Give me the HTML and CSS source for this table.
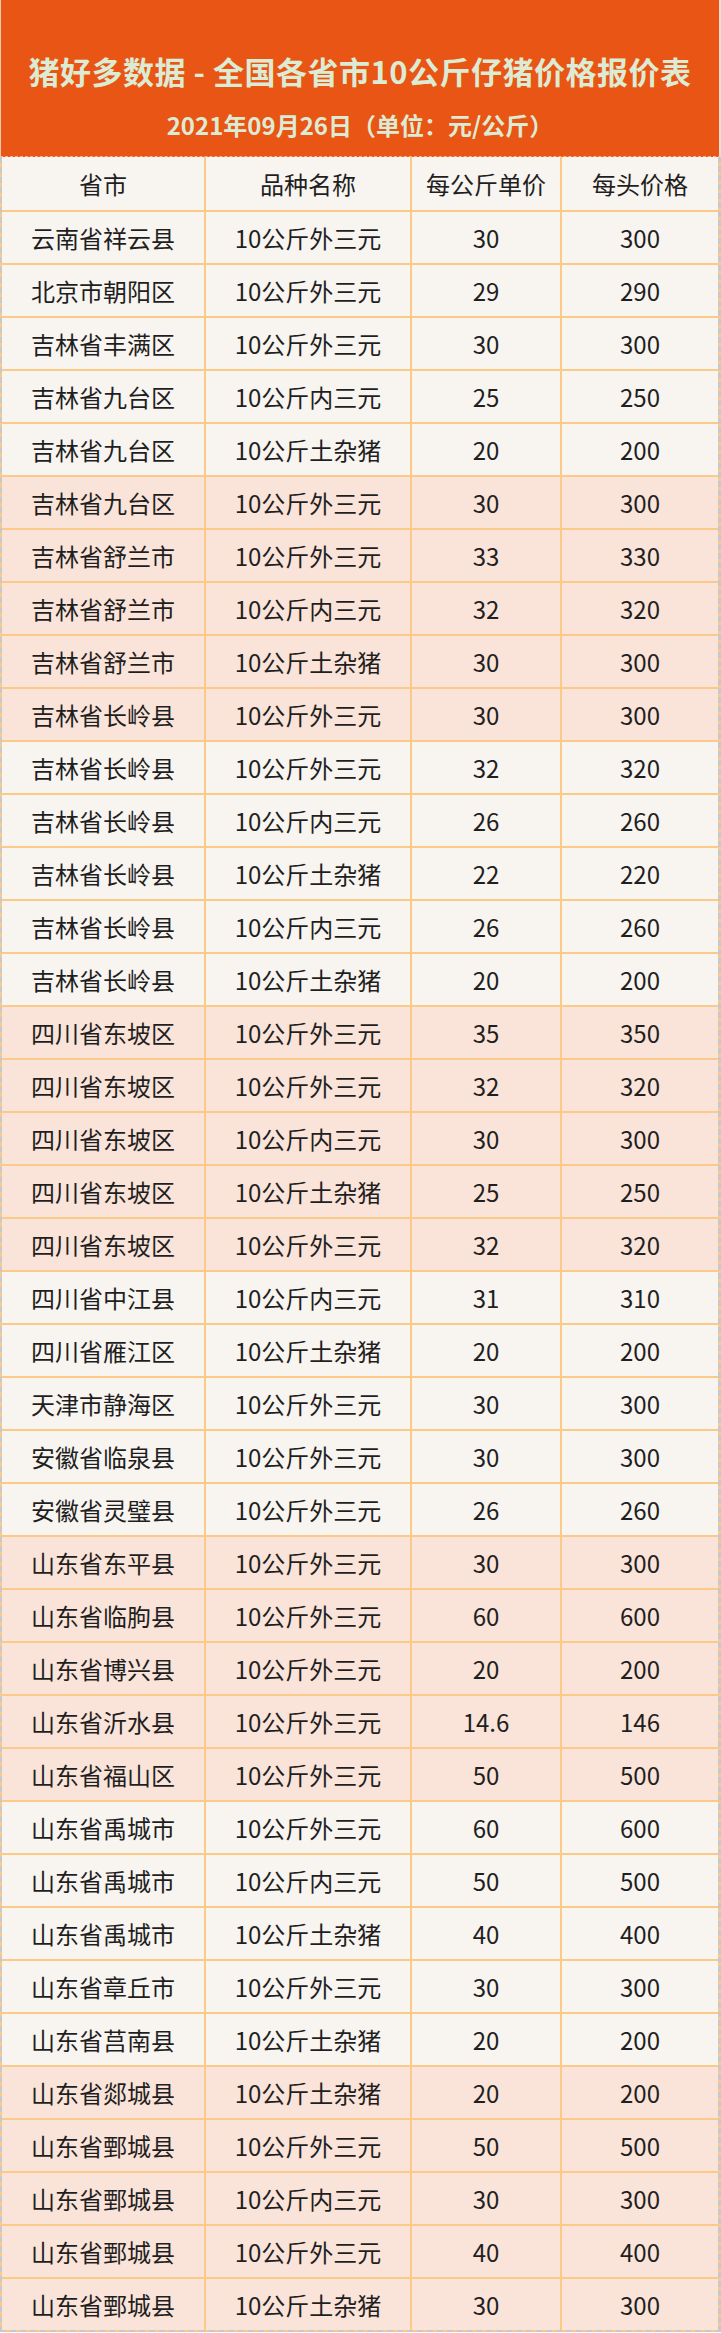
FILE: index.html
```html
<!DOCTYPE html>
<html lang="zh-CN">
<head>
<meta charset="utf-8">
<title>猪好多数据 - 全国各省市10公斤仔猪价格报价表</title>
<link rel="stylesheet" href="styles.css">
</head>
<body>
<div class="sheet">
  <header class="banner">
    <h1 class="title">猪好多数据 - 全国各省市10公斤仔猪价格报价表</h1>
    <p class="subtitle">2021年09月26日（单位：元/公斤）</p>
  </header>
  <div class="table">
    <div class="row head"><div>省市</div><div>品种名称</div><div>每公斤单价</div><div>每头价格</div></div>
    <div class="row a"><div>云南省祥云县</div><div>10公斤外三元</div><div>30</div><div>300</div></div>
    <div class="row a"><div>北京市朝阳区</div><div>10公斤外三元</div><div>29</div><div>290</div></div>
    <div class="row a"><div>吉林省丰满区</div><div>10公斤外三元</div><div>30</div><div>300</div></div>
    <div class="row a"><div>吉林省九台区</div><div>10公斤内三元</div><div>25</div><div>250</div></div>
    <div class="row a"><div>吉林省九台区</div><div>10公斤土杂猪</div><div>20</div><div>200</div></div>
    <div class="row b"><div>吉林省九台区</div><div>10公斤外三元</div><div>30</div><div>300</div></div>
    <div class="row b"><div>吉林省舒兰市</div><div>10公斤外三元</div><div>33</div><div>330</div></div>
    <div class="row b"><div>吉林省舒兰市</div><div>10公斤内三元</div><div>32</div><div>320</div></div>
    <div class="row b"><div>吉林省舒兰市</div><div>10公斤土杂猪</div><div>30</div><div>300</div></div>
    <div class="row b"><div>吉林省长岭县</div><div>10公斤外三元</div><div>30</div><div>300</div></div>
    <div class="row a"><div>吉林省长岭县</div><div>10公斤外三元</div><div>32</div><div>320</div></div>
    <div class="row a"><div>吉林省长岭县</div><div>10公斤内三元</div><div>26</div><div>260</div></div>
    <div class="row a"><div>吉林省长岭县</div><div>10公斤土杂猪</div><div>22</div><div>220</div></div>
    <div class="row a"><div>吉林省长岭县</div><div>10公斤内三元</div><div>26</div><div>260</div></div>
    <div class="row a"><div>吉林省长岭县</div><div>10公斤土杂猪</div><div>20</div><div>200</div></div>
    <div class="row b"><div>四川省东坡区</div><div>10公斤外三元</div><div>35</div><div>350</div></div>
    <div class="row b"><div>四川省东坡区</div><div>10公斤外三元</div><div>32</div><div>320</div></div>
    <div class="row b"><div>四川省东坡区</div><div>10公斤内三元</div><div>30</div><div>300</div></div>
    <div class="row b"><div>四川省东坡区</div><div>10公斤土杂猪</div><div>25</div><div>250</div></div>
    <div class="row b"><div>四川省东坡区</div><div>10公斤外三元</div><div>32</div><div>320</div></div>
    <div class="row a"><div>四川省中江县</div><div>10公斤内三元</div><div>31</div><div>310</div></div>
    <div class="row a"><div>四川省雁江区</div><div>10公斤土杂猪</div><div>20</div><div>200</div></div>
    <div class="row a"><div>天津市静海区</div><div>10公斤外三元</div><div>30</div><div>300</div></div>
    <div class="row a"><div>安徽省临泉县</div><div>10公斤外三元</div><div>30</div><div>300</div></div>
    <div class="row a"><div>安徽省灵璧县</div><div>10公斤外三元</div><div>26</div><div>260</div></div>
    <div class="row b"><div>山东省东平县</div><div>10公斤外三元</div><div>30</div><div>300</div></div>
    <div class="row b"><div>山东省临朐县</div><div>10公斤外三元</div><div>60</div><div>600</div></div>
    <div class="row b"><div>山东省博兴县</div><div>10公斤外三元</div><div>20</div><div>200</div></div>
    <div class="row b"><div>山东省沂水县</div><div>10公斤外三元</div><div>14.6</div><div>146</div></div>
    <div class="row b"><div>山东省福山区</div><div>10公斤外三元</div><div>50</div><div>500</div></div>
    <div class="row a"><div>山东省禹城市</div><div>10公斤外三元</div><div>60</div><div>600</div></div>
    <div class="row a"><div>山东省禹城市</div><div>10公斤内三元</div><div>50</div><div>500</div></div>
    <div class="row a"><div>山东省禹城市</div><div>10公斤土杂猪</div><div>40</div><div>400</div></div>
    <div class="row a"><div>山东省章丘市</div><div>10公斤外三元</div><div>30</div><div>300</div></div>
    <div class="row a"><div>山东省莒南县</div><div>10公斤土杂猪</div><div>20</div><div>200</div></div>
    <div class="row b"><div>山东省郯城县</div><div>10公斤土杂猪</div><div>20</div><div>200</div></div>
    <div class="row b"><div>山东省鄄城县</div><div>10公斤外三元</div><div>50</div><div>500</div></div>
    <div class="row b"><div>山东省鄄城县</div><div>10公斤内三元</div><div>30</div><div>300</div></div>
    <div class="row b"><div>山东省鄄城县</div><div>10公斤外三元</div><div>40</div><div>400</div></div>
    <div class="row b"><div>山东省鄄城县</div><div>10公斤土杂猪</div><div>30</div><div>300</div></div>
  </div>
</div>
</body>
</html>
```

FILE: styles.css
```css
* { box-sizing: border-box; }
html, body { margin: 0; padding: 0; background: #ffffff; }
body {
  font-family: "Noto Sans CJK SC", "Noto Sans", sans-serif;
  color: #1f1f1f;
}
.sheet {
  width: 721px;
}
.banner {
  height: 157px;
  background: #e85515;
  border-left: 1px solid #f3c9b0;
  border-right: 2px solid #f7ddd0;
  border-bottom: 1px dashed #f6b48f;
  display: flex;
  flex-direction: column;
  align-items: center;
  padding-top: 45px;
}
.title {
  margin: 0;
  font-size: 31px;
  line-height: 52px;
  font-weight: 700;
  color: #dcebd4;
  letter-spacing: 0.5px;
}
.subtitle {
  margin: 12px 0 0;
  font-size: 24px;
  line-height: 32px;
  font-weight: 700;
  color: #dcebd4;
}
.table {
  display: flex;
  flex-direction: column;
  row-gap: 2px;
  background: #fcca88;
  border-left: 2px dashed #c9c9c9;
  border-right: 3px dashed #c9c9c9;
  border-bottom: 2px dashed #c9c9c9;
}
.row {
  display: grid;
  grid-template-columns: 202px 204px 148px 156px;
  column-gap: 2px;
  height: 51px;
}
.row.head { height: 53px; }
.row > div {
  display: flex;
  align-items: center;
  justify-content: center;
  font-size: 24px;
  line-height: 1;
}
.row.a > div, .row.head > div { background: #f8f4f0; }
.row.b > div { background: #fae3d8; }
```
